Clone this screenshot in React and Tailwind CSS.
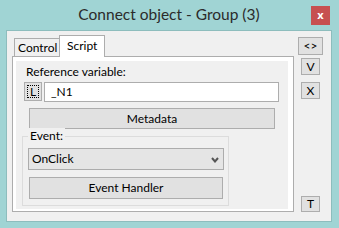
function Btn({ className = "", children }) {
  return (
    <div
      className={`flex items-center justify-center bg-[#e1e1e1] border border-[#adadad] text-black text-[12px] leading-none ${className}`}
    >
      {children}
    </div>
  );
}

export default function App() {
  return (
    <div className="w-[339px] h-[228px] bg-[#a0d4d4] flex flex-col pl-[6px] pr-[7px] pb-[6px] font-['Lato',sans-serif] overflow-hidden">
      {/* title bar */}
      <div className="h-[30px] shrink-0 grid grid-cols-[1fr_auto_1fr]">
        <div />
        <div className="pt-[4px] text-[15.5px] leading-[20px] text-[#2b2b2b]">
          Connect object - Group (3)
        </div>
        <div className="flex justify-end items-start pt-[6px]">
          <div className="w-[19px] h-[19px] mr-[2px] bg-[#c75050] flex items-center justify-center text-white text-[11px] font-bold leading-none pb-[2px] font-['Noto_Sans',sans-serif]">
            x
          </div>
        </div>
      </div>

      {/* client area */}
      <div className="flex-1 bg-[#f0f0f0] border border-[#8dbdbd] flex pl-[5px] pt-[4px] pb-[9px]">
        <div className="w-[282px] flex flex-col">
          <div className="h-[21px] flex items-end pl-[2px]">
            <div className="w-[45px] h-[18px] bg-[#f0f0f0] border-t border-l border-[#adadad] text-[12px] leading-none pl-[3px] pt-[3px] whitespace-nowrap">
              Control
            </div>
            <div className="relative z-10 -mb-px w-[46px] h-[22px] bg-white border-t border-l border-r border-[#adadad] text-[12px] leading-none pl-[7px] pt-[4px]">
              Script
            </div>
          </div>

          <div className="h-[156px] border border-[#adadad] bg-white pl-[3px] pt-[4px] pr-[5px] pb-[2px] flex">
            <div className="flex-1 bg-[#f0f0f0] flex flex-col pt-[3px] text-[12px] text-black">
              <div className="pl-[10px] leading-[15px]">Reference variable:</div>

              <div className="flex mt-[3px] ml-[8px]">
                <Btn className="w-[18px] h-[19px] p-[2px]">
                  <span className="w-full h-full border border-dotted border-black flex items-center justify-center">
                    L
                  </span>
                </Btn>
                <div className="ml-[2px] w-[235px] h-[20px] bg-white border border-[#adadad] flex items-center pl-[6px] leading-none">
                  _N1
                </div>
              </div>

              <Btn className="mt-[6px] ml-[13px] w-[246px] h-[21px]">Metadata</Btn>

              <div className="relative mt-[7px] ml-[6px] w-[207px] h-[70px] border border-[#dcdcdc] flex flex-col">
                <span className="absolute -top-[9px] left-[5px] bg-[#f0f0f0] px-[2px] leading-[15px]">
                  Event:
                </span>
                <div className="mt-[11px] ml-[5px] w-[196px] h-[22px] bg-[#e5e5e5] border border-[#acacac] flex items-center justify-between pl-[3px] pr-[4px] leading-none">
                  <span>OnClick</span>
                  <svg width="8" height="6" viewBox="0 0 8 6" className="mt-[1px]">
                    <path d="M1 1 L4 4.5 L7 1" fill="none" stroke="#555" strokeWidth="2" />
                  </svg>
                </div>
                <Btn className="mt-[7px] ml-[6px] w-[194px] h-[22px]">Event Handler</Btn>
              </div>
            </div>
          </div>
        </div>

        {/* side buttons */}
        <div className="ml-[4px] w-[25px] flex flex-col items-center">
          <Btn className="mt-[2px] w-[25px] h-[18px] border-[#3c9cf0]">&lt;&gt;</Btn>
          <Btn className="mt-[3px] w-[19px] h-[17px]">V</Btn>
          <Btn className="mt-[7px] w-[19px] h-[17px]">X</Btn>
          <div className="flex-1" />
          <Btn className="w-[19px] h-[16px]">T</Btn>
        </div>
      </div>
    </div>
  );
}
